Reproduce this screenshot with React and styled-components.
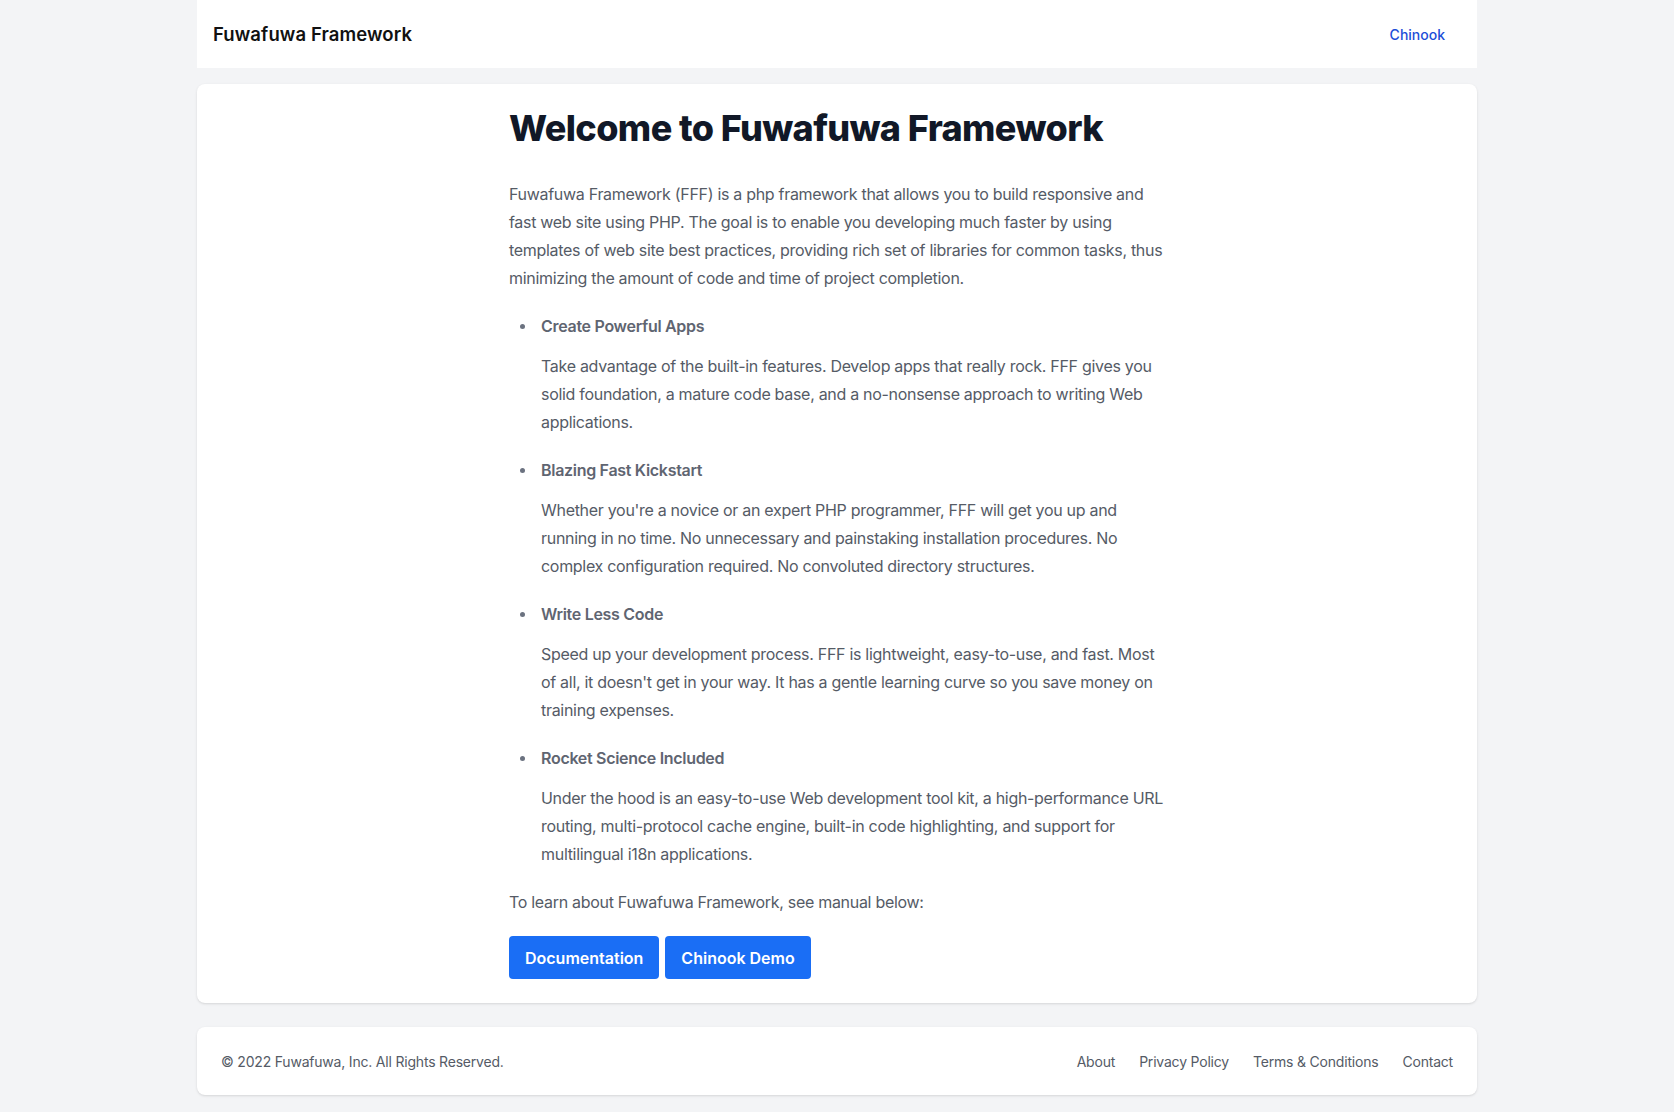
import React from 'react';
import styled, { createGlobalStyle } from 'styled-components';

const GlobalStyle = createGlobalStyle`
  html, body {
    margin: 0;
    padding: 0;
    background-color: #f3f4f6;
    font-family: Inter, "Noto Sans", "Liberation Sans", sans-serif;
    -webkit-font-smoothing: antialiased;
  }
  * {
    box-sizing: border-box;
  }
`;

const Page = styled.div`
  width: 1280px;
  margin: 0 auto;
  padding-bottom: 16px;
`;

const Header = styled.header`
  height: 68px;
  background-color: #ffffff;
  display: flex;
  align-items: center;
  justify-content: space-between;
  padding: 0 32px 0 16px;
`;

const Brand = styled.div`
  font-size: 18.5px;
  font-weight: 600;
  color: #111111;
  letter-spacing: 0.1px;
`;

const NavLink = styled.a`
  font-size: 14px;
  font-weight: 500;
  color: #1d4ed8;
  text-decoration: none;
`;

const Main = styled.main`
  margin-top: 16px;
  background-color: #ffffff;
  border-radius: 8px;
  box-shadow: 0 1px 3px 0 rgba(0, 0, 0, 0.1), 0 1px 2px -1px rgba(0, 0, 0, 0.1);
  padding: 24px 24px 24px;
`;

const Prose = styled.article`
  max-width: 656px;
  margin: 0 auto;
  color: #555b66;
  font-size: 16px;
  line-height: 28px;
  letter-spacing: -0.3px;

  h1 {
    margin: 0 0 32px;
    font-size: 36px;
    line-height: 40px;
    font-weight: 800;
    color: #111827;
    letter-spacing: -0.6px;
  }

  p {
    margin: 20px 0;
  }
`;

const List = styled.ul`
  margin: 20px 0;
  padding-left: 32px;
  list-style: none;
`;

const Item = styled.li`
  position: relative;
  margin: 20px 0;

  &::before {
    content: '';
    position: absolute;
    left: -21px;
    top: 12px;
    width: 5px;
    height: 5px;
    border-radius: 50%;
    background-color: #6b7280;
  }

  strong {
    display: block;
    font-weight: 600;
    color: #5f6571;
  }

  p {
    margin: 12px 0 0;
  }
`;

const Actions = styled.div`
  display: flex;
  gap: 6px;
  margin-top: 20px;
`;

const Button = styled.a`
  display: inline-block;
  padding: 8px 16px 7px;
  border-radius: 4px;
  background-color: #1a6ef5;
  color: #ffffff;
  font-size: 16px;
  font-weight: 600;
  line-height: 28px;
  letter-spacing: 0;
  text-decoration: none;
`;

const Footer = styled.footer`
  margin-top: 24px;
  height: 68px;
  background-color: #ffffff;
  border-radius: 8px;
  box-shadow: 0 1px 3px 0 rgba(0, 0, 0, 0.1), 0 1px 2px -1px rgba(0, 0, 0, 0.1);
  padding: 0 24px;
  display: flex;
  align-items: center;
  justify-content: space-between;
  font-size: 14px;
  letter-spacing: -0.2px;
  color: #555b66;
`;

const FooterLinks = styled.nav`
  display: flex;
  gap: 24px;
`;

const FooterLink = styled.a`
  color: #555b66;
  text-decoration: none;
`;

const features = [
  {
    title: 'Create Powerful Apps',
    text: 'Take advantage of the built-in features. Develop apps that really rock. FFF gives you solid foundation, a mature code base, and a no-nonsense approach to writing Web applications.',
  },
  {
    title: 'Blazing Fast Kickstart',
    text: "Whether you're a novice or an expert PHP programmer, FFF will get you up and running in no time. No unnecessary and painstaking installation procedures. No complex configuration required. No convoluted directory structures.",
  },
  {
    title: 'Write Less Code',
    text: "Speed up your development process. FFF is lightweight, easy-to-use, and fast. Most of all, it doesn't get in your way. It has a gentle learning curve so you save money on training expenses.",
  },
  {
    title: 'Rocket Science Included',
    text: 'Under the hood is an easy-to-use Web development tool kit, a high-performance URL routing, multi-protocol cache engine, built-in code highlighting, and support for multilingual i18n applications.',
  },
];

export default function App() {
  return (
    <>
      <GlobalStyle />
      <Page>
        <Header>
          <Brand>Fuwafuwa Framework</Brand>
          <NavLink href="#">Chinook</NavLink>
        </Header>
        <Main>
          <Prose>
            <h1>Welcome to Fuwafuwa Framework</h1>
            <p>
              Fuwafuwa Framework (FFF) is a php framework that allows you to build responsive and
              fast web site using PHP. The goal is to enable you developing much faster by using
              templates of web site best practices, providing rich set of libraries for common tasks, thus
              minimizing the amount of code and time of project completion.
            </p>
            <List>
              {features.map(f => (
                <Item key={f.title}>
                  <strong>{f.title}</strong>
                  <p>{f.text}</p>
                </Item>
              ))}
            </List>
            <p>To learn about Fuwafuwa Framework, see manual below:</p>
            <Actions>
              <Button href="#">Documentation</Button>
              <Button href="#">Chinook Demo</Button>
            </Actions>
          </Prose>
        </Main>
        <Footer>
          <span>© 2022 Fuwafuwa, Inc. All Rights Reserved.</span>
          <FooterLinks>
            <FooterLink href="#">About</FooterLink>
            <FooterLink href="#">Privacy Policy</FooterLink>
            <FooterLink href="#">Terms &amp; Conditions</FooterLink>
            <FooterLink href="#">Contact</FooterLink>
          </FooterLinks>
        </Footer>
      </Page>
    </>
  );
}
